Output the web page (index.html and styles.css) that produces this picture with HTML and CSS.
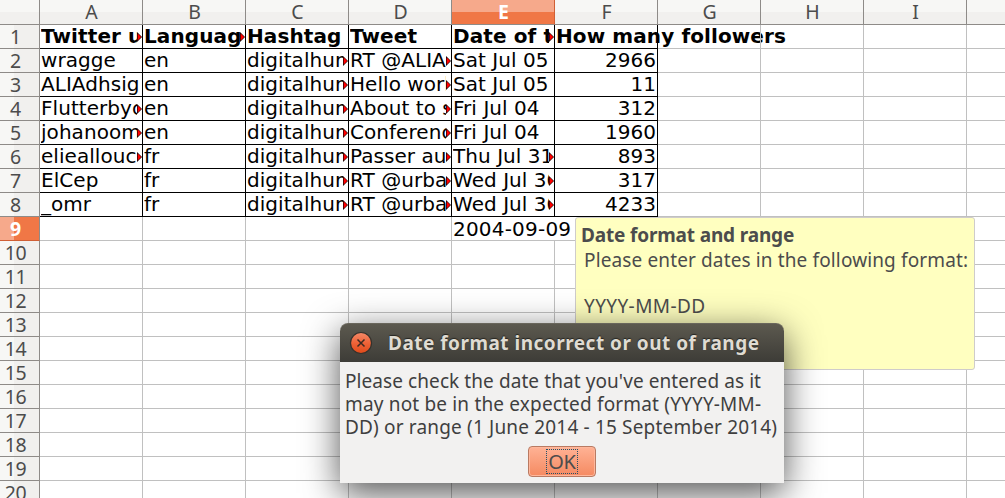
FILE: index.html
```html
<!DOCTYPE html>
<html lang="en">
<head>
<meta charset="utf-8">
<title>Spreadsheet</title>
<link rel="stylesheet" href="styles.css">
</head>
<body>
<main class="app">
  <div class="sheet" id="sheet"></div>

  <aside class="hint">
    <strong class="hint-title">Date format and range</strong>
    <p class="hint-text">Please enter dates in the following format:</p>
    <p class="hint-sample">YYYY-MM-DD</p>
  </aside>

  <section class="dialog">
    <header class="titlebar">
      <svg class="close" viewBox="0 0 24 24" width="24" height="24">
        <defs>
          <linearGradient id="orb" x1="0" y1="0" x2="0" y2="1">
            <stop offset="0" stop-color="#f58a69"/>
            <stop offset=".5" stop-color="#ee6338"/>
            <stop offset="1" stop-color="#df4a1a"/>
          </linearGradient>
        </defs>
        <circle cx="12" cy="12" r="10.5" fill="url(#orb)" stroke="#34322d" stroke-width="1.2"/>
        <path d="M8.5 8.5l7 7M15.5 8.5l-7 7" stroke="#3c2a22" stroke-width="1.5" fill="none"/>
      </svg>
      <h1 class="title">Date format incorrect or out of range</h1>
    </header>
    <div class="body">
      <p class="message">
        <span class="line">Please check the date that you've entered as it</span>
        <span class="line loose">may not be in the expected format (YYYY-MM-</span>
        <span class="line loose">DD) or range (1 June 2014 - 15 September 2014)</span>
      </p>
      <button class="ok"><span class="focus">OK</span></button>
    </div>
  </section>
</main>
<script src="sheet.js"></script>
</body>
</html>
```
FILE: styles.css
```css
* { box-sizing: border-box; }
body { margin: 0; overflow: hidden; background: #fff; }
p, h1 { margin: 0; }

.app {
  position: relative;
  width: 1005px;
  height: 498px;
  overflow: hidden;
  font-family: "Noto Sans", sans-serif;
  color: #4c4c4c;
}

/* Grid */
.sheet {
  display: grid;
  grid-template-columns: 40px repeat(10, 103px);
  grid-template-rows: 25px repeat(20, 24px);
}
.col, .row {
  font-size: 19.5px;
  line-height: 24px;
  text-align: center;
  border-right: 1px solid #8e8b88;
  border-bottom: 1px solid #8e8b88;
}
.col { background: linear-gradient(#f7f7f5 0 12px, #f1f0ee 12px); padding-left: 1px; }
.row {
  background: linear-gradient(90deg, #f7f7f5 0 14px, #f1f0ee 14px);
  padding-right: 8px;
  letter-spacing: -0.4px;
}
.active { color: #fff; font-weight: 700; }
.col.active { background: linear-gradient(#f6a98b 0 12px, #f07746 12px); border-right-color: #d05f35; }
.row.active { background: linear-gradient(90deg, #f6a98b 0 14px, #f07746 14px); border-bottom-color: #d05f35; }

.cell {
  display: flex;
  min-width: 0;
  border-right: 1px solid #c0c0c0;
  border-bottom: 1px solid #c0c0c0;
  padding-left: 1px;
  font: 20px/22px "DejaVu Sans", sans-serif;
  letter-spacing: 0.05px;
  color: #000;
  white-space: nowrap;
}
.filled { border-color: #000; }
.head { font-weight: 700; letter-spacing: 0.1px; }
.number { justify-content: flex-end; padding-right: 1px; }
.text { flex: 1; min-width: 0; overflow: hidden; }
.number .text { flex: none; }
.spill .text { overflow: visible; }
.entry .text {
  flex: none;
  width: 121px;
  height: 23px;
  line-height: 24px;
  letter-spacing: 0.2px;
  background: #fff;
  overflow: visible;
  position: relative;
}
.more { flex: none; width: 5px; height: 10px; margin-top: 7px; }

/* Input hint */
.hint {
  position: absolute;
  left: 575px;
  top: 217px;
  width: 400px;
  height: 153px;
  padding: 5px 0 0 5px;
  background: #ffffc0;
  border: 1px solid #cfcccb;
  border-radius: 3px;
  white-space: nowrap;
}
.hint-title { display: block; font-size: 19px; line-height: 25px; letter-spacing: -0.16px; }
.hint-text { padding-left: 3px; font-size: 19px; line-height: 25px; letter-spacing: 0.13px; }
.hint-sample { padding: 22px 0 0 3px; font-size: 19px; line-height: 23px; letter-spacing: 0.4px; }

/* Dialog */
.dialog {
  position: absolute;
  left: 340px;
  top: 323px;
  width: 444px;
  height: 160px;
  display: flex;
  flex-direction: column;
  border-radius: 8px 8px 0 0;
  box-shadow: 0 10px 36px rgba(0, 0, 0, .68);
}
.titlebar {
  display: flex;
  align-items: center;
  height: 39px;
  padding-left: 9px;
  gap: 15px;
  border-radius: 8px 8px 0 0;
  background: linear-gradient(#5c594f, #3d3c37);
  border-top: 1px solid #69665c;
}
.title {
  font-size: 19px;
  line-height: 38px;
  letter-spacing: 0.49px;
  color: #dfdbd2;
  text-shadow: 0 -1px 1px #262521;
  white-space: nowrap;
}
.body {
  flex: 1;
  display: flex;
  flex-direction: column;
  align-items: center;
  background: #f2f1f0;
  padding-top: 8px;
}
.message {
  width: 444px;
  padding-left: 5px;
  font-size: 19px;
  line-height: 23px;
  white-space: nowrap;
  color: #3f3f3f;
}
.line { display: block; letter-spacing: 0.08px; }
.loose { letter-spacing: 0.17px; }
.ok {
  width: 68px;
  height: 31px;
  margin-top: 7px;
  padding: 0;
  display: flex;
  align-items: center;
  justify-content: center;
  border: 1px solid #b97a62;
  border-radius: 4px;
  background: linear-gradient(#ffb295, #f58a61);
  box-shadow: inset 0 0 0 1px #ffb79b;
  font: 20px/23px "Noto Sans", sans-serif;
  color: #4c4c4c;
}
.focus { border: 1px dotted #24516a; width: 32px; height: 25px; letter-spacing: -0.3px; }
```
FILE: sheet.js
```js
// A trailing "~" marks text that is cut off by the cell's right edge.
const rows = [
  ["Twitter us~", "Language~", "Hashtag", "Tweet", "Date of tw~", "How many followers"],
  ["wragge", "en", "digitalhum~", "RT @ALIAd~", "Sat Jul 05", "2966"],
  ["ALIAdhsig", "en", "digitalhum~", "Hello world~", "Sat Jul 05", "11"],
  ["Flutterbyc~", "en", "digitalhum~", "About to s~", "Fri Jul 04", "312"],
  ["johanoom~", "en", "digitalhum~", "Conferenc~", "Fri Jul 04", "1960"],
  ["elieallouc~", "fr", "digitalhum~", "Passer au ~", "Thu Jul 31~", "893"],
  ["ElCep", "fr", "digitalhum~", "RT @urba~", "Wed Jul 30~", "317"],
  ["_omr", "fr", "digitalhum~", "RT @urba~", "Wed Jul 30~", "4233"],
  ["", "", "", "", "2004-09-09"]
];
const arrow = '<svg class="more" viewBox="0 0 5 10"><path d="M0 0L5 5L0 10Z" fill="#000"/><path d="M.6 1.3L4.3 5L.6 8.7Z" fill="#f00"/></svg>';
let html = '<div class="col corner"></div>';
for (const c of "ABCDEFGHI") html += `<div class="col${c === "E" ? " active" : ""}">${c}</div>`;
html += '<div class="col"></div>';
for (let r = 0; r < 20; r++) {
  html += `<div class="row${r === 8 ? " active" : ""}">${r + 1}</div>`;
  for (let c = 0; c < 10; c++) {
    const value = (rows[r] && rows[r][c]) || "";
    let cls = "cell";
    if (r < 8 && c < 6) cls += " filled";
    if (r === 0) cls += " head";
    if (r === 0 && c === 5) cls += " spill";
    if (r > 0 && r < 8 && c === 5) cls += " number";
    if (r === 8 && c === 4) cls += " entry";
    const cut = value.endsWith("~");
    html += `<div class="${cls}">${value ? `<span class="text">${cut ? value.slice(0, -1) : value}</span>` : ""}${cut ? arrow : ""}</div>`;
  }
}
document.getElementById("sheet").innerHTML = html;
```
